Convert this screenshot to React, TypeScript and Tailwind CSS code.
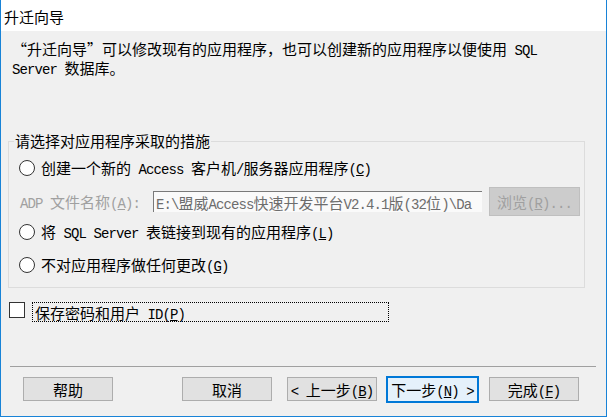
import React from 'react';

// half-width latin text, SimSun-style cell width (7.5px next to 15px CJK)
const L: React.FC<{ children: React.ReactNode }> = ({ children }) => (
  <span className="font-['Liberation_Mono',monospace] text-[14px] tracking-[-0.9px] leading-none whitespace-pre">{children}</span>
);

const Radio: React.FC = () => (
  <span className="w-[16px] h-[16px] shrink-0 rounded-full border border-[#333333] bg-white" />
);

const Button: React.FC<{ children: React.ReactNode; className?: string; focused?: boolean }> = ({
  children,
  className = '',
  focused,
}) => (
  <button
    className={`flex items-center justify-center text-black ${
      focused
        ? 'w-[93px] h-[27px] border-2 border-[#0078d7] bg-[#e5f1fb]'
        : 'w-[90px] h-[24px] border border-[#adadad] bg-[#e1e1e1]'
    } ${className}`}
  >
    <span className="whitespace-nowrap">{children}</span>
  </button>
);

const App: React.FC = () => {
  return (
    <div className="w-[607px] h-[417px] flex flex-col border-l border-r border-b border-[#1883d7] bg-[#f0f0f0] font-['Noto_Sans_CJK_SC',sans-serif] text-[15px] leading-[19px] text-black overflow-hidden">
      {/* title bar */}
      <div className="h-[31px] shrink-0 flex items-center pl-[3px] pt-[1px] bg-white">升迁向导</div>

      {/* description */}
      <div className="pt-[8px] pl-[11px]">
        <div className="h-[19px]">
          “升迁向导”可以修改现有的应用程序，也可以创建新的应用程序以便使用<L> SQL</L>
        </div>
        <div className="h-[19px]">
          <L>Server </L>数据库。
        </div>
      </div>

      {/* options group */}
      <fieldset className="mt-[55px] ml-[7px] w-[577px] border border-[#dcdcdc] pb-[12px]">
        <legend className="ml-[5px] px-[1px] leading-[18px]">请选择对应用程序采取的措施</legend>

        <div className="pl-[10px] pr-[3px]">
          <div className="mt-[7px] h-[21px] flex items-center gap-[6px]">
            <Radio />
            <span>
              创建一个新的<L> Access </L>客户机<L>/</L>服务器应用程序
              <L>
                (<u>C</u>)
              </L>
            </span>
          </div>

          <div className="mt-[8px] h-[31px] flex items-center text-[#a0a0a0]">
            <span className="w-[134px] shrink-0 pl-[1px]">
              <L>ADP </L>文件名称
              <L>
                (<u>A</u>):
              </L>
            </span>
            <div className="w-[329px] h-[21px] flex items-center border-l border-t border-[#7a7a7a] bg-[#fafafa] pl-[2px] text-[#6d6d6d] overflow-hidden">
              <span className="whitespace-nowrap">
                <L>E:\</L>盟威<L>Access</L>快速开发平台<L>V2.4.1</L>版<L>(32</L>位<L>)\Da</L>
              </span>
            </div>
            <div className="ml-[7px] w-[91px] h-[29px] flex items-center justify-center border border-[#bfbfbf] bg-[#cccccc]">
              <span className="whitespace-nowrap">
                浏览
                <L>
                  (<u>R</u>)...
                </L>
              </span>
            </div>
          </div>

          <div className="mt-[4px] h-[21px] flex items-center gap-[6px]">
            <Radio />
            <span>
              将<L> SQL Server </L>表链接到现有的应用程序
              <L>
                (<u>L</u>)
              </L>
            </span>
          </div>

          <div className="mt-[12px] h-[21px] flex items-center gap-[6px]">
            <Radio />
            <span>
              不对应用程序做任何更改
              <L>
                (<u>G</u>)
              </L>
            </span>
          </div>
        </div>
      </fieldset>

      {/* save password checkbox */}
      <div className="mt-[14px] ml-[8px] flex items-start gap-[7px]">
        <span className="w-[16px] h-[16px] shrink-0 border border-[#333333] bg-white" />
        <div className="w-[357px] h-[20px] flex items-center pl-[2px] border border-dotted border-black">
          <span className="whitespace-nowrap">
            保存密码和用户
            <L>
              {' '}ID(<u>P</u>)
            </L>
          </span>
        </div>
      </div>

      {/* separator */}
      <div className="mt-[44px] ml-[9px] w-[586px] h-px bg-[#a0a0a0]" />

      {/* buttons */}
      <div className="mt-[10px] h-[24px] pl-[22px] flex items-center">
        <Button>帮助</Button>
        <Button className="ml-[69px]">取消</Button>
        <Button className="ml-[15px]">
          <L>{'< '}</L>上一步
          <L>
            (<u>B</u>)
          </L>
        </Button>
        <Button className="ml-[9px]" focused>
          下一步
          <L>
            (<u>N</u>){' >'}
          </L>
        </Button>
        <Button className="ml-[10px]">
          完成
          <L>
            (<u>F</u>)
          </L>
        </Button>
      </div>
    </div>
  );
};

export default App;
